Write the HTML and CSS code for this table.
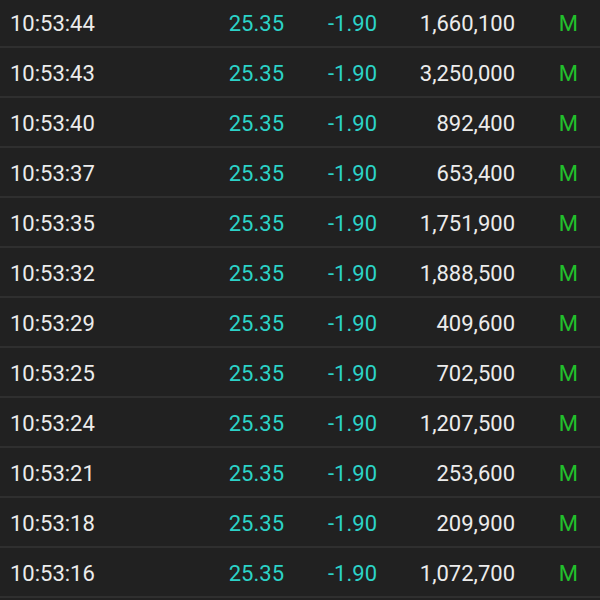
FILE: index.html
```html
<!DOCTYPE html>
<html lang="en">
<head>
  <meta charset="UTF-8">
  <meta name="viewport" content="width=device-width, initial-scale=1.0">
  <title>Ticks</title>
  <link rel="stylesheet" href="styles.css">
</head>
<body>
  <div class="ticks">
    <div class="tick"><span class="time">10:53:44</span><span class="price">25.35</span><span class="chg">-1.90</span><span class="vol">1,660,100</span><span class="side">M</span></div>
    <div class="tick"><span class="time">10:53:43</span><span class="price">25.35</span><span class="chg">-1.90</span><span class="vol">3,250,000</span><span class="side">M</span></div>
    <div class="tick"><span class="time">10:53:40</span><span class="price">25.35</span><span class="chg">-1.90</span><span class="vol">892,400</span><span class="side">M</span></div>
    <div class="tick"><span class="time">10:53:37</span><span class="price">25.35</span><span class="chg">-1.90</span><span class="vol">653,400</span><span class="side">M</span></div>
    <div class="tick"><span class="time">10:53:35</span><span class="price">25.35</span><span class="chg">-1.90</span><span class="vol">1,751,900</span><span class="side">M</span></div>
    <div class="tick"><span class="time">10:53:32</span><span class="price">25.35</span><span class="chg">-1.90</span><span class="vol">1,888,500</span><span class="side">M</span></div>
    <div class="tick"><span class="time">10:53:29</span><span class="price">25.35</span><span class="chg">-1.90</span><span class="vol">409,600</span><span class="side">M</span></div>
    <div class="tick"><span class="time">10:53:25</span><span class="price">25.35</span><span class="chg">-1.90</span><span class="vol">702,500</span><span class="side">M</span></div>
    <div class="tick"><span class="time">10:53:24</span><span class="price">25.35</span><span class="chg">-1.90</span><span class="vol">1,207,500</span><span class="side">M</span></div>
    <div class="tick"><span class="time">10:53:21</span><span class="price">25.35</span><span class="chg">-1.90</span><span class="vol">253,600</span><span class="side">M</span></div>
    <div class="tick"><span class="time">10:53:18</span><span class="price">25.35</span><span class="chg">-1.90</span><span class="vol">209,900</span><span class="side">M</span></div>
    <div class="tick"><span class="time">10:53:16</span><span class="price">25.35</span><span class="chg">-1.90</span><span class="vol">1,072,700</span><span class="side">M</span></div>
  </div>
</body>
</html>
```

FILE: styles.css
```css
* { margin:0; padding:0; box-sizing:border-box; }
html, body { background:#212121; }
body {
  font-family: Roboto, 'Liberation Sans', sans-serif;
  font-size:22px;
  color:#ececec;
  overflow:hidden;
}
.ticks { margin-top:-2px; }
.tick {
  display:grid;
  grid-template-columns: 150px 134px 93px 138px 1fr;
  align-items:center;
  height:50px;
  padding-top:2px;
  border-bottom:2px solid #2f2f2f;
}
.time { padding-left:10px; }
.price, .chg, .vol { text-align:right; }
.price, .chg { color:#2cd3c8; }
.side {
  color:#22c02c;
  text-align:right;
  padding-right:22px;
}
```
